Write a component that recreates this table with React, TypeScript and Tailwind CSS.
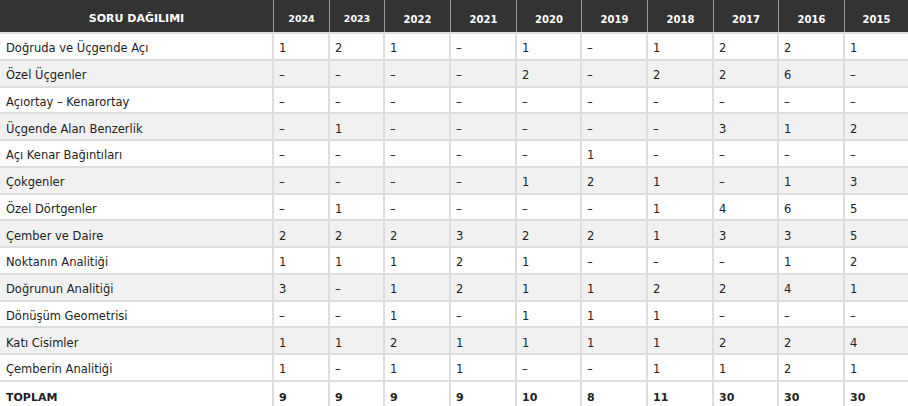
import React from "react";

const years = ["2024", "2023", "2022", "2021", "2020", "2019", "2018", "2017", "2016", "2015"];

const rows: { name: string; values: string[] }[] = [
  { name: "Doğruda ve Üçgende Açı", values: ["1", "2", "1", "–", "1", "–", "1", "2", "2", "1"] },
  { name: "Özel Üçgenler", values: ["–", "–", "–", "–", "2", "–", "2", "2", "6", "–"] },
  { name: "Açıortay – Kenarortay", values: ["–", "–", "–", "–", "–", "–", "–", "–", "–", "–"] },
  { name: "Üçgende Alan Benzerlik", values: ["–", "1", "–", "–", "–", "–", "–", "3", "1", "2"] },
  { name: "Açı Kenar Bağıntıları", values: ["–", "–", "–", "–", "–", "1", "–", "–", "–", "–"] },
  { name: "Çokgenler", values: ["–", "–", "–", "–", "1", "2", "1", "–", "1", "3"] },
  { name: "Özel Dörtgenler", values: ["–", "1", "–", "–", "–", "–", "1", "4", "6", "5"] },
  { name: "Çember ve Daire", values: ["2", "2", "2", "3", "2", "2", "1", "3", "3", "5"] },
  { name: "Noktanın Analitiği", values: ["1", "1", "1", "2", "1", "–", "–", "–", "1", "2"] },
  { name: "Doğrunun Analitiği", values: ["3", "–", "1", "2", "1", "1", "2", "2", "4", "1"] },
  { name: "Dönüşüm Geometrisi", values: ["–", "–", "1", "–", "1", "1", "1", "–", "–", "–"] },
  { name: "Katı Cisimler", values: ["1", "1", "2", "1", "1", "1", "1", "2", "2", "4"] },
  { name: "Çemberin Analitiği", values: ["1", "–", "1", "1", "–", "–", "1", "1", "2", "1"] },
];

const totals = ["9", "9", "9", "9", "10", "8", "11", "30", "30", "30"];

// column widths measured off the picture, borders included
const cols = "grid grid-cols-[274px_56px_55px_66px_66px_65px_66px_66px_65px_66px_63px]";

const App = () => {
  return (
    <div className="w-[908px] h-[406px] overflow-hidden bg-white text-[#222] font-['DejaVu_Sans',Verdana,sans-serif] text-[11.5px]">
      <div className={`${cols} h-[34px] bg-[#333333] text-white font-bold border-b-2 border-[#dddddd]`}>
        <div className="flex items-center justify-center border-r border-[#999] text-[11px] pt-[6px]">
          SORU DAĞILIMI
        </div>
        {years.map((year, i) => (
          <div
            key={year}
            className={`flex items-center justify-center pt-[6px] ${i < 2 ? "text-[9.5px]" : "text-[10px]"} ${
              i < years.length - 1 ? "border-r border-[#999]" : ""
            }`}
          >
            {year}
          </div>
        ))}
      </div>

      {rows.map((row, r) => (
        <div
          key={row.name}
          className={`${cols} h-[26.77px] border-b-2 border-[#dddddd] ${r % 2 === 1 ? "bg-[#f1f1f1]" : "bg-white"}`}
        >
          <div className="flex items-center pl-[6px] pt-[5px] border-r-2 border-[#dddddd]">{row.name}</div>
          {row.values.map((v, i) => (
            <div
              key={i}
              className={`flex items-center pl-[5px] pt-[5px] ${i < row.values.length - 1 ? "border-r-2 border-[#dddddd]" : ""}`}
            >
              {v}
            </div>
          ))}
        </div>
      ))}

      <div className={`${cols} h-[27px] font-bold bg-white text-[11px]`}>
        <div className="flex items-center pl-[6px] pt-[5px] border-r-2 border-[#dddddd]">TOPLAM</div>
        {totals.map((v, i) => (
          <div
            key={i}
            className={`flex items-center pl-[5px] pt-[5px] ${i < totals.length - 1 ? "border-r-2 border-[#dddddd]" : ""}`}
          >
            {v}
          </div>
        ))}
      </div>
    </div>
  );
};

export default App;
